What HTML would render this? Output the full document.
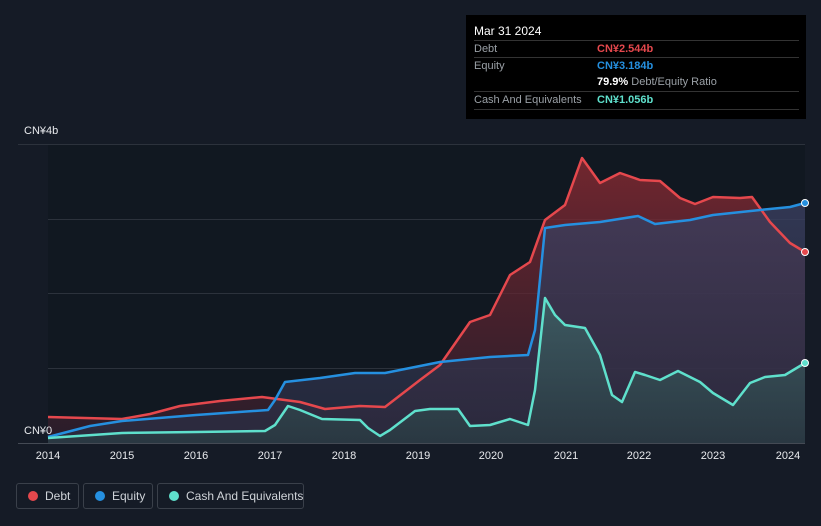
<!DOCTYPE html><html><head><style>
body{margin:0;width:821px;height:526px;background:#151b26;font-family:"Liberation Sans",sans-serif;overflow:hidden;position:relative}
.tip{position:absolute;left:466px;top:15px;width:340px;height:104px;background:#000;color:#fff;font-size:11px}
.row{position:absolute;left:8px;width:325px;height:17px;border-top:1px solid #333;line-height:17px;color:#9aa0a6}
.row span{position:absolute;left:123px}
.leg{position:absolute;top:483px;height:26px;border:1px solid #3a404a;border-radius:3px;color:#cfd3d8;font-size:12px;line-height:24px;box-sizing:border-box;white-space:nowrap}
.leg i{position:absolute;left:11px;top:7px;width:10px;height:10px;border-radius:50%}
.leg span{position:absolute;left:28px;top:0}
.ax{position:absolute;top:450px;color:#e8eaed;font-size:11px;transform:translateX(-50%)}
</style></head><body>
<svg width="821" height="526" style="position:absolute;left:0;top:0">
<defs>
<linearGradient id="gd" x1="0" y1="0" x2="0" y2="1"><stop offset="0" stop-color="#8a2a32" stop-opacity=".8"/><stop offset="1" stop-color="#3a2030" stop-opacity=".6"/></linearGradient>
<linearGradient id="ge" x1="0" y1="0" x2="0" y2="1"><stop offset="0" stop-color="#3a3f60" stop-opacity=".8"/><stop offset="1" stop-color="#2a2e44" stop-opacity=".7"/></linearGradient>
<linearGradient id="gc" x1="0" y1="0" x2="0" y2="1"><stop offset="0" stop-color="#3f6a6a" stop-opacity=".7"/><stop offset="1" stop-color="#2a3e44" stop-opacity=".7"/></linearGradient>
</defs>
<rect x="48" y="144" width="757" height="299" fill="#111821"/>
<g stroke="#2c323c" stroke-width="1"><line x1="18" y1="144.5" x2="805" y2="144.5"/><line x1="48" y1="219.5" x2="805" y2="219.5"/><line x1="48" y1="293.5" x2="805" y2="293.5"/><line x1="48" y1="368.5" x2="805" y2="368.5"/><line x1="18" y1="443.5" x2="805" y2="443.5" stroke="#444a54"/></g>
<polygon fill="url(#gd)" points="48,417 122,419 150,414 180,406 220,401 262,397 300,402 325,409 360,406 385,407 420,380 440,365 470,322 490,315 510,275 530,262 545,220 565,205 582,158 600,183 620,173 640,180 660,181 680,198 695,204 713,197 740,198 752,197 770,222 790,243 805,252 805,443 48,443"/>
<polygon fill="url(#ge)" points="48,437 90,426 122,421 196,415 268,410 275,400 285,382 320,378 355,373 385,373 420,366 440,362 490,357 528,355 535,330 545,228 565,225 600,222 638,216 655,224 690,220 713,215 760,210 790,207 805,203 805,443 48,443"/>
<polygon fill="url(#gc)" points="48,438 122,433 196,432 265,431 275,425 288,406 300,410 322,419 360,420 368,428 380,436 390,430 415,411 430,409 458,409 470,426 490,425 510,419 528,425 535,390 545,298 555,315 565,325 585,328 600,355 612,395 622,402 635,372 645,375 660,380 678,371 700,382 713,393 733,405 750,383 765,377 785,375 805,363 805,443 48,443"/>
<g fill="none" stroke-width="2.5" stroke-linejoin="round">
<polyline stroke="#e5484d" points="48,417 122,419 150,414 180,406 220,401 262,397 300,402 325,409 360,406 385,407 420,380 440,365 470,322 490,315 510,275 530,262 545,220 565,205 582,158 600,183 620,173 640,180 660,181 680,198 695,204 713,197 740,198 752,197 770,222 790,243 805,252"/>
<polyline stroke="#2590e0" points="48,437 90,426 122,421 196,415 268,410 275,400 285,382 320,378 355,373 385,373 420,366 440,362 490,357 528,355 535,330 545,228 565,225 600,222 638,216 655,224 690,220 713,215 760,210 790,207 805,203"/>
<polyline stroke="#5fe0cc" points="48,438 122,433 196,432 265,431 275,425 288,406 300,410 322,419 360,420 368,428 380,436 390,430 415,411 430,409 458,409 470,426 490,425 510,419 528,425 535,390 545,298 555,315 565,325 585,328 600,355 612,395 622,402 635,372 645,375 660,380 678,371 700,382 713,393 733,405 750,383 765,377 785,375 805,363"/>
</g>
<circle cx="805" cy="252" r="3.5" fill="#e5484d" stroke="#fff" stroke-width="1"/>
<circle cx="805" cy="203" r="3.5" fill="#2590e0" stroke="#fff" stroke-width="1"/>
<circle cx="805" cy="363" r="3.5" fill="#5fe0cc" stroke="#fff" stroke-width="1"/>
</svg>
<div style="position:absolute;left:24px;top:125px;color:#e8eaed;font-size:11px">CN¥4b</div>
<div style="position:absolute;left:24px;top:425px;color:#e8eaed;font-size:11px">CN¥0</div>
<div class="ax" style="left:48px">2014</div><div class="ax" style="left:122px">2015</div><div class="ax" style="left:196px">2016</div><div class="ax" style="left:270px">2017</div><div class="ax" style="left:344px">2018</div><div class="ax" style="left:418px">2019</div><div class="ax" style="left:491px">2020</div><div class="ax" style="left:566px">2021</div><div class="ax" style="left:639px">2022</div><div class="ax" style="left:713px">2023</div><div class="ax" style="left:788px">2024</div>
<div class="tip">
<div style="position:absolute;left:8px;top:9px;font-size:12px">Mar 31 2024</div>
<div class="row" style="top:25px">Debt<span style="color:#e5484d;font-weight:bold">CN¥2.544b</span></div>
<div class="row" style="top:42px">Equity<span style="color:#2590e0;font-weight:bold">CN¥3.184b</span></div>
<div class="row" style="top:59px;border-top:none"><span style="color:#9aa0a6"><b style="color:#fff">79.9%</b> Debt/Equity Ratio</span></div>
<div class="row" style="top:76px">Cash And Equivalents<span style="color:#5fe0cc;font-weight:bold">CN¥1.056b</span></div>
<div style="position:absolute;left:8px;top:94px;width:325px;border-top:1px solid #333"></div>
</div>
<div class="leg" style="left:16px;width:63px"><i style="background:#e5484d"></i><span>Debt</span></div>
<div class="leg" style="left:83px;width:70px"><i style="background:#2590e0"></i><span>Equity</span></div>
<div class="leg" style="left:157px;width:147px"><i style="background:#5fe0cc"></i><span>Cash And Equivalents</span></div>
</body></html>
